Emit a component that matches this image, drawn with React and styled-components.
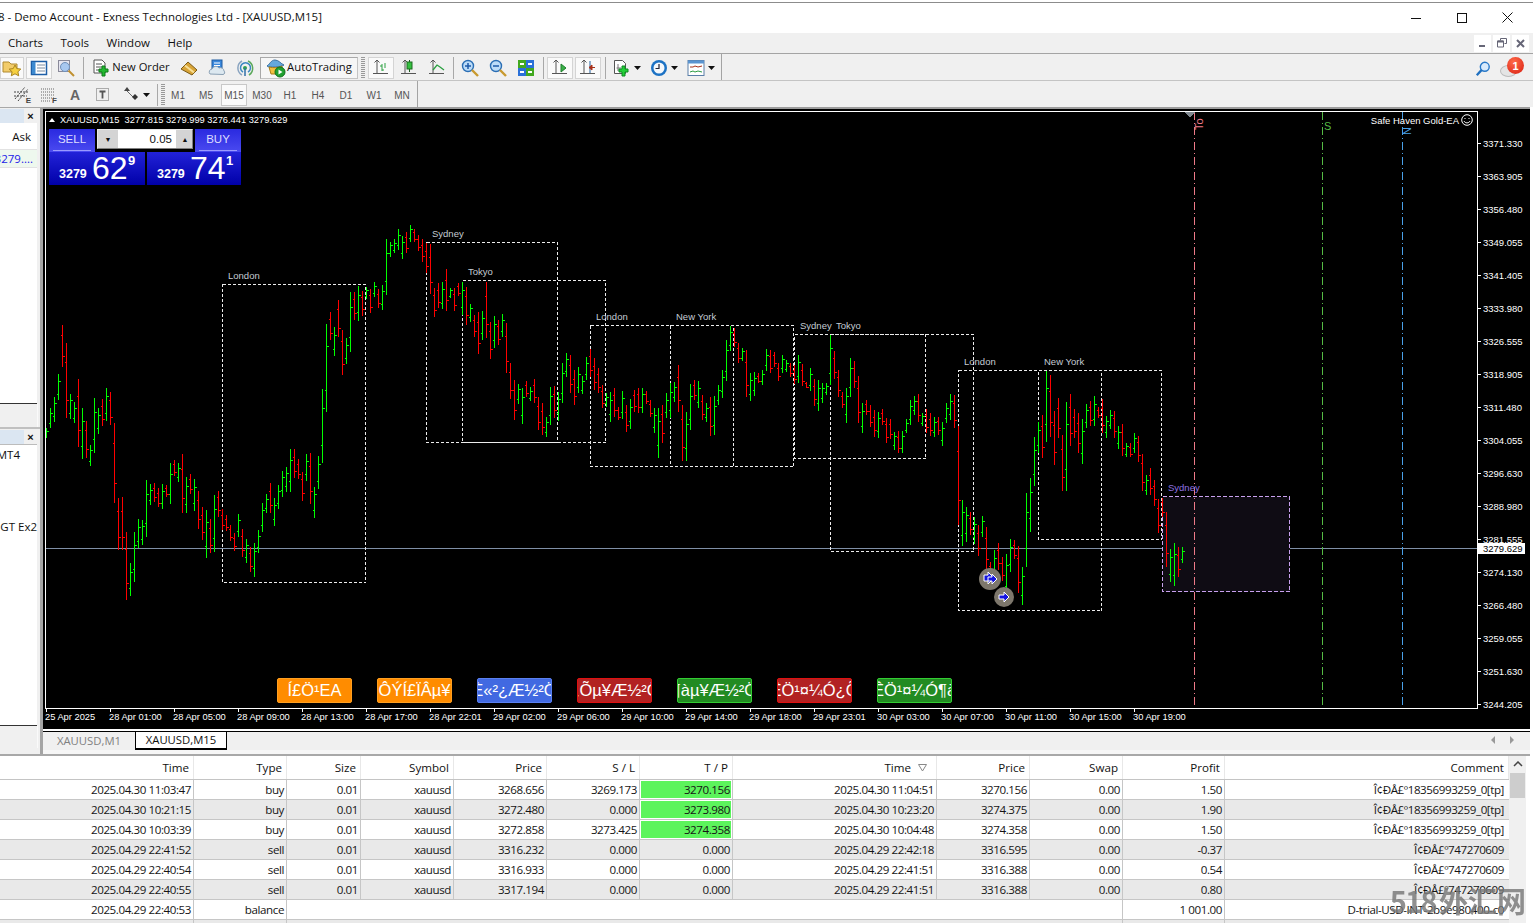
import React from "react";
import styled, { createGlobalStyle } from "styled-components";

const UI_FONT = `"Open Sans", "Noto Sans", sans-serif`;
const CHART_FONT = `"Liberation Sans", Arial, sans-serif`;

const GlobalStyle = createGlobalStyle`
  html, body {
    margin: 0;
    padding: 0;
    background: #fff;
    overflow: hidden;
  }
  * { box-sizing: border-box; }
`;

/* bars read off the reference, in groups: "colour high,low" (3x crop coordinates) */
const BARS_A = "g625,655 g565,625 g532,605 g463,540 r315,440 r370,595 g522,597 g547,610 r478,680 g565,716 r603,714 g675,737 g535,698 g565,642 r538,617 g505,602 r515,615 r610,848 r835,990 r832,990 r937,1140 g1030,1128 g937,1085 g898,985 g900,975 g780,950 g793,855 r790,845 r805,862 g793,868 r795,830 g730,852 r720,768 g730,785 r703,878 g770,878 r763,822 g778,873 r812,926 r860,960 g870,1013 r898,1000 g825,995 r813,890 r868,930 r885,932 r915,963 r940,992 g883,950 r928,1010 g958,1028 r982,1055 g968,1070 g930,998 g850,935 g822,880 r790,878 g835,917 g795,868 g753,830 g742,815 g688,815 r688,775 r718,778 r755,842 g703,782 r700,852 g800,893 g708,808 g508,730 g312,575 r277,360 g322,408 r240,352 r330,465 g355,432 g217,395 r217,300 g198,303 r212,287 g202,236 r208,280 g186,230 r208,263 g195,270 g58,225 g65,110 g58,100 g28,90 g48,117 r35,100 g15,65 r28,65 r45,92 r58,125 r70,160 r72,222 r205,290 r190,265 g187,268 r148,272 g203,235 r205,272 r188,228 g185,285 r200,315 g252,305 r285,350 r275,402 g273,360 r185,355 r305,416 g288,385 r300,375";
const BARS_B = "g282,350 r310,460 r430,538 r480,600 g492,552 g505,612 r483,530 g502,543 r478,548 r532,630 r550,645 g590,650 g500,615 r498,595 g515,602 g428,550 g400,472 r405,520 r450,555 g442,520 g468,522 g410,480 r388,470 r415,510 r445,518 r495,565 g520,560 g517,605 r505,590 r560,600 g513,598 r555,635 g538,626 r510,575 r505,578 g505,578 r512,552 r540,590 g565,640 g565,713 r555,668 g520,595 g490,595 g485,545 r435,575 r555,722 g575,722 g492,630 r480,540 g483,565 r525,600 g550,605 r532,648 g528,645 g495,555 g450,535 g360,482 g318,392 r325,380 r370,428 g385,422 r390,530 g460,542 g457,528 r460,490 g450,495 g388,452 r390,460 r395,440 r430,482 g405,458 g420,455 r428,470 r435,492 g405,490 r432,498 r485,505 g445,512 r478,557 g480,572 g490,550 g488,525 g345,495 r393,478 r450,530 r515,565 g503,608 g415,530 r423,503 r468,610 g550,640 r540,585 r555,622 r570,650 g575,653 r568,615 r595,668 r597,658 g635,690 r633,700 g632,700 g597,640 g540,615 g528,585 r522,605 g580,617 r568,640 r580,648 g590,650 r590,645 g605,678 g550,608 g522,600 r525,625";
const BARS_C = "r257,555 g480,618 g500,605 r517,585 g532,612 r555,648 g528,590 r562,690 r665,720 g630,720 r610,690 r650,722 g642,770 g598,695 r600,658 r618,760 g680,795 g460,680 g415,575 g292,438 g245,340 r225,353 g92,305 r105,292 r213,375 r175,295 r285,452 g187,452 r162,318 r208,295 r220,338 g238,372 g193,265 r183,258 g168,258 r200,235 r178,280 g228,293 g210,268 r213,293 g258,327 r253,347 g308,352 r310,352 g280,338 r288,365 r342,452 g405,465 r385,465 r420,497 r478,580 r473,530 r515,680 g628,725 g610,737 r622,710 g622,670";

const parseBars = (text, base) =>
  text.split(" ").map((item) => {
    const [high, low] = item.slice(1).split(",").map(Number);
    return { up: item[0] === "g", high: base + high / 3, low: base + low / 3 };
  });

const BARS = [
  ...parseBars(BARS_A, 220),
  ...parseBars(BARS_B, 220),
  ...parseBars(BARS_C, 340),
].map((bar, i) => ({ ...bar, x: 46.5 + i * 4 }));

const SESSIONS = [
  { name: "London", x: 222.5, y: 284.5, w: 143, h: 298 },
  { name: "Sydney", x: 426.5, y: 242.5, w: 131, h: 200 },
  { name: "Tokyo", x: 462.5, y: 280.5, w: 143, h: 162 },
  { name: "London", x: 590.5, y: 325.5, w: 143, h: 141 },
  { name: "New York", x: 670.5, y: 325.5, w: 123, h: 141 },
  { name: "Sydney", x: 794.5, y: 334.5, w: 131, h: 124 },
  { name: "Tokyo", x: 830.5, y: 334.5, w: 143, h: 217 },
  { name: "London", x: 958.5, y: 370.5, w: 143, h: 240 },
  { name: "New York", x: 1038.5, y: 370.5, w: 123, h: 169 },
];

const PRICES = [
  "3371.330", "3363.905", "3356.480", "3349.055", "3341.405", "3333.980", "3326.555", "3318.905", "3311.480",
  "3304.055", "3296.630", "3288.980", "3281.555", "3274.130", "3266.480", "3259.055", "3251.630", "3244.205",
];

const TIMES = [
  "25 Apr 2025", "28 Apr 01:00", "28 Apr 05:00", "28 Apr 09:00", "28 Apr 13:00", "28 Apr 17:00", "28 Apr 22:01",
  "29 Apr 02:00", "29 Apr 06:00", "29 Apr 10:00", "29 Apr 14:00", "29 Apr 18:00", "29 Apr 23:01", "30 Apr 03:00",
  "30 Apr 07:00", "30 Apr 11:00", "30 Apr 15:00", "30 Apr 19:00",
];

const ACTIONS = [
  { label: "Í£Ö¹EA", bg: "#ff8c00", edge: "#ff9f20" },
  { label: "ÔÝÍ£ÏÂµ¥", bg: "#ff8c00", edge: "#ff9f20" },
  { label: "È«²¿Æ½²Ö", bg: "#4169e1", edge: "#5a80f0" },
  { label: "¿Õµ¥Æ½²Ö", bg: "#b22222", edge: "#e01010" },
  { label: "¶àµ¥Æ½²Ö", bg: "#228b22", edge: "#32cd32" },
  { label: "ÊÖ¹¤¼Ó¿Õ", bg: "#b22222", edge: "#e01010" },
  { label: "ÊÖ¹¤¼Ó¶à", bg: "#228b22", edge: "#32cd32" },
];

const COLUMNS = "194px 93px 74px 93px 93px 93px 93px 204px 93px 93px 102px 284px";
const HEADERS = ["Time", "Type", "Size", "Symbol", "Price", "S / L", "T / P", "Time", "Price", "Swap", "Profit", "Comment"];
const WX_LONG = "Î¢ÐÅ£º18356993259_0[tp]";
const WX_SHORT = "Î¢ÐÅ£º747270609";

const TRADES = [
  ["2025.04.30 11:03:47", "buy", "0.01", "xauusd", "3268.656", "3269.173", "3270.156", "2025.04.30 11:04:51", "3270.156", "0.00", "1.50", WX_LONG],
  ["2025.04.30 10:21:15", "buy", "0.01", "xauusd", "3272.480", "0.000", "3273.980", "2025.04.30 10:23:20", "3274.375", "0.00", "1.90", WX_LONG],
  ["2025.04.30 10:03:39", "buy", "0.01", "xauusd", "3272.858", "3273.425", "3274.358", "2025.04.30 10:04:48", "3274.358", "0.00", "1.50", WX_LONG],
  ["2025.04.29 22:41:52", "sell", "0.01", "xauusd", "3316.232", "0.000", "0.000", "2025.04.29 22:42:18", "3316.595", "0.00", "-0.37", WX_SHORT],
  ["2025.04.29 22:40:54", "sell", "0.01", "xauusd", "3316.933", "0.000", "0.000", "2025.04.29 22:41:51", "3316.388", "0.00", "0.54", WX_SHORT],
  ["2025.04.29 22:40:55", "sell", "0.01", "xauusd", "3317.194", "0.000", "0.000", "2025.04.29 22:41:51", "3316.388", "0.00", "0.80", WX_SHORT],
];

/* ---------- icons ---------- */

const Icon = ({ children, size = 18, box = 18 }) => (
  <svg width={size} height={size} viewBox={`0 0 ${box} ${box}`} fill="none">
    {children}
  </svg>
);

const Dropdown = () => (
  <svg width="8" height="5" viewBox="0 0 8 5"><path d="M0 0h7L3.5 4z" fill="#111" /></svg>
);

const FolderStar = () => (
  <Icon size={20} box={20}>
    <path d="M1 4h6l2 2h6v8H1z" fill="#f2cc6a" stroke="#b08a30" />
    <path d="M13 7l1.8 3.6 4 .5-2.9 2.7.8 4-3.7-2-3.7 2 .8-4-2.9-2.7 4-.5z" fill="#f6d040" stroke="#a88420" />
  </Icon>
);
const NavigatorIcon = () => (
  <Icon>
    <rect x="1.5" y="2.5" width="15" height="13" fill="#fff" stroke="#1d5fa8" strokeWidth="1.5" />
    <rect x="2" y="3" width="3.5" height="12" fill="#3d8ad0" />
    <path d="M7 6h8M7 9h8M7 12h8" stroke="#7a8ca0" />
  </Icon>
);
const TesterIcon = () => (
  <Icon>
    <rect x="1.5" y="1.5" width="11" height="11" fill="#e6e6f0" stroke="#8a8a9a" />
    <circle cx="8" cy="8" r="4.5" fill="#a8c8f0" stroke="#6f8fb8" />
    <path d="M11.5 11.5L17 17" stroke="#c09030" strokeWidth="2" />
  </Icon>
);
const NewOrderIcon = () => (
  <Icon size={18}>
    <path d="M2 1h8l3 3v10H2z" fill="#fff" stroke="#555" />
    <path d="M4 5h6M4 8h6M4 11h4" stroke="#555" />
    <path d="M10 7h3v3h3v3h-3v4h-3v-4H7v-3h3z" fill="#22b830" stroke="#0d7a18" />
  </Icon>
);
const ChestIcon = () => (
  <Icon>
    <path d="M1 10l7-7 9 8-5 5z" fill="#d8a438" stroke="#7a5a16" />
    <path d="M5 6.5l9 7" stroke="#f8e098" strokeWidth="2" />
  </Icon>
);
const MarketIcon = () => (
  <Icon>
    <rect x="4" y="1" width="10" height="11" fill="#3a88dc" stroke="#1c5aa0" />
    <path d="M6 4h6M6 6.5h6" stroke="#fff" />
    <path d="M2 15a3 3 0 0 1 2-5 4 4 0 0 1 7-1 3.5 3.5 0 0 1 5 3 2 2 0 0 1-1 3.5z" fill="#dce8f0" stroke="#8aa0b4" />
  </Icon>
);
const SignalIcon = () => (
  <Icon>
    <path d="M6 16a8 8 0 0 1 0-14" stroke="#8aa4c0" strokeWidth="1.5" />
    <path d="M12 2a8 8 0 0 1 1 14" stroke="#5aa85a" strokeWidth="1.5" />
    <path d="M7 13a5 5 0 1 1 5 0" stroke="#3a88c0" strokeWidth="1.5" />
    <circle cx="9" cy="9" r="2" fill="#30a050" />
    <path d="M9 9v8" stroke="#2f6fa8" strokeWidth="1.5" />
  </Icon>
);
const AutoIcon = () => (
  <Icon size={20} box={20}>
    <path d="M1 8c3-2 4-6 8-6s6 4 9 5c-2 2-15 3-17 1z" fill="#64a8dc" stroke="#3a70a0" />
    <path d="M3 9c4 1 10 1 13-1l-1 8H5z" fill="#f2c040" stroke="#a87d18" />
    <circle cx="14" cy="14" r="5" fill="#20a030" stroke="#0f7018" />
    <path d="M12.5 11.5l4 2.5-4 2.5z" fill="#fff" />
  </Icon>
);
const Axes = () => <path d="M5 1v14M1 14.5h15M2.5 3.5L5 1l2.5 2.5" stroke="#555" />;
const BarChartIcon = () => (
  <Icon><Axes /><path d="M10 5v7M8 7h2M10 11h2M13 4v5" stroke="#2aa040" /></Icon>
);
const CandleIcon = () => (
  <Icon><Axes /><path d="M9.5 1v12" stroke="#205a20" /><rect x="7" y="3" width="5" height="7" fill="#35c040" stroke="#1c6a20" /></Icon>
);
const LineChartIcon = () => (
  <Icon><Axes /><path d="M5 11l4-5 3 2 4 3" stroke="#2aa040" strokeWidth="1.3" /></Icon>
);
const ZoomIcon = ({ plus }) => (
  <Icon>
    <circle cx="7" cy="7" r="5.5" fill="#bcdcf8" stroke="#2a6eb4" strokeWidth="1.4" />
    <path d="M4 7h6" stroke="#1c5aa8" strokeWidth="1.5" />
    {plus && <path d="M7 4v6" stroke="#1c5aa8" strokeWidth="1.5" />}
    <path d="M11 11l6 6" stroke="#c89a30" strokeWidth="2.4" />
  </Icon>
);
const TileIcon = () => (
  <Icon>
    <rect x="1" y="1" width="8" height="8" fill="#42a820" />
    <rect x="9" y="1" width="8" height="8" fill="#2a70d8" />
    <rect x="1" y="9" width="8" height="8" fill="#2a70d8" />
    <rect x="9" y="9" width="8" height="8" fill="#42a820" />
    <path d="M3 5h4M11 5h4M3 13h4M11 13h4" stroke="#fff" strokeWidth="2" />
  </Icon>
);
const ShiftIcon = () => (
  <Icon><Axes /><path d="M10 5l5 4-5 4z" fill="#3ab048" stroke="#1f7f2c" /></Icon>
);
const AutoScrollIcon = () => (
  <Icon><Axes /><path d="M11 2v12" stroke="#2060a0" /><path d="M16 8.5h-3M13 6l-3 2.5L13 11z" fill="#a83018" stroke="#a83018" /></Icon>
);
const NewChartIcon = () => (
  <Icon>
    <path d="M1.5 1.5h8l3 3v10h-11z" fill="#fff" stroke="#555" />
    <path d="M5 5v7M3.5 9H8" stroke="#777" />
    <path d="M9 7h3v3h3v3h-3v4H9v-4H6v-3h3z" fill="#22d038" stroke="#0d8a20" />
  </Icon>
);
const ClockIcon = () => (
  <Icon>
    <circle cx="9" cy="9" r="8" fill="#1c72c4" />
    <circle cx="9" cy="9" r="5.5" fill="#f4f8fc" />
    <path d="M9 5v4.5H5.5" stroke="#223" strokeWidth="1.2" />
  </Icon>
);
const TemplateIcon = () => (
  <Icon>
    <rect x="1" y="1.5" width="16" height="15" fill="#fff" stroke="#5a7fa8" />
    <rect x="1" y="1.5" width="16" height="3" fill="#5a94d0" />
    <path d="M3 8h3l2-1 3 1 4-1" stroke="#a83018" />
    <path d="M3 13l3-1 2 1 3-1 4 1" stroke="#2a9a40" />
  </Icon>
);
const LinesEIcon = () => (
  <Icon>
    <path d="M2 13L12 1M5 15L15 3M1 6h14M1 10h13" stroke="#444" strokeDasharray="2 1" />
  </Icon>
);
const DotsFIcon = () => (
  <Icon>
    <path d="M2 3h14M2 6h14M2 9h14M2 12h14M2 15h9" stroke="#666" strokeDasharray="1 1" />
  </Icon>
);
const TextBoxIcon = () => (
  <Icon>
    <rect x="2.5" y="2.5" width="12" height="12" stroke="#666" strokeDasharray="1 1" />
    <path d="M5.5 5.5h6M8.5 5.5v7" stroke="#555" strokeWidth="1.8" />
  </Icon>
);
const ArrowsIcon = () => (
  <Icon>
    <path d="M5 1l3 4H2z" fill="#444" />
    <path d="M5 5l7 7" stroke="#666" />
    <path d="M13 8l3 3-3 3-3-3z" fill="#333" />
  </Icon>
);
const SearchIcon = () => (
  <Icon size={16}>
    <circle cx="11" cy="6.5" r="5" fill="#d8eafc" stroke="#2878c8" strokeWidth="1.6" />
    <path d="M7.5 10L2 16" stroke="#2070c0" strokeWidth="2.6" />
  </Icon>
);
const Smiley = () => (
  <svg width="12" height="12" viewBox="0 0 12 12" fill="none">
    <circle cx="6" cy="6" r="5.3" stroke="#fff" />
    <path d="M3 7c1 2.5 5 2.5 6 0" stroke="#fff" />
    <path d="M4 4v1M8 4v1" stroke="#fff" />
  </svg>
);

/* ---------- window chrome ---------- */

const Window = styled.div`
  width: 1533px;
  height: 924px;
  overflow: hidden;
  background: #fff;
  font-family: ${UI_FONT};
  color: #111;
`;

const TitleBar = styled.div`
  height: 33px;
  margin-top: 2px;
  padding-right: 3px;
  border-top: 1px solid #8c8c8c;
  margin-bottom: -2px;
  display: flex;
  align-items: center;
  justify-content: space-between;
  background: #fff;
`;

const TitleText = styled.div`
  font-size: 11.5px;
  margin-left: -2px;
  margin-top: -5px;
  white-space: nowrap;
`;

const WindowButtons = styled.div`
  display: flex;
  width: 137px;
  margin-top: -3px;
`;

const WindowButton = styled.div`
  width: 45.7px;
  display: flex;
  justify-content: center;
  align-items: center;
`;

const MenuBar = styled.div`
  height: 20px;
  background: #f0f0f0;
  padding: 0 3px 0 8px;
  display: flex;
  align-items: center;
  justify-content: space-between;
  font-size: 11.5px;
`;

const MenuItems = styled.div`
  display: flex;
  gap: 17.5px;
  margin-top: -1px;
`;

const MdiButtons = styled.div`
  display: flex;
  gap: 2px;
  margin-right: 1px;
`;

const MdiButton = styled.div`
  width: 17px;
  height: 17px;
  background: #fff;
  display: flex;
  align-items: center;
  justify-content: center;
`;

const ToolRow = styled.div`
  height: 27px;
  padding-top: 2px;
  background: #f0f0f0;
  border-top: 1px solid ${(p) => (p.$first ? "#a4a4a4" : "#c4c4c4")};
  display: flex;
  align-items: center;
  gap: 2px;
  position: relative;
`;

const ToolEnd = styled.div`
  width: 1px;
  height: 26px;
  margin-top: -2px;
  background: #a4a4a4;
`;

const ToolButton = styled.div`
  width: ${(p) => p.$w}px;
  height: 22px;
  display: flex;
  align-items: center;
  justify-content: center;
  gap: ${(p) => p.$gap || 0}px;
  font-size: 11.2px;
  color: ${(p) => p.$color || "#111"};
  background: ${(p) => (p.$pressed ? "#fafafa" : "transparent")};
  border: 1px solid ${(p) => (p.$pressed ? "#d4d4d4" : "transparent")};
`;

const ToolLabel = styled.span`
  transform: translateY(-2px);
`;

const TimeframeButton = styled(ToolButton)`
  font-family: ${CHART_FONT};
  font-size: 10px;
  color: #555;
  width: 26px;
  border: ${(p) => (p.$pressed ? "1px solid #c8c8c8" : "1px solid transparent")};
`;

const AutoButton = styled(ToolButton)`
  background: #f6f6f6;
  font-size: 11.3px;
  border: 1px solid #c4c4c4;
  border-top-color: #a8a8a8;
  border-left-color: #a8a8a8;
`;

const Separator = styled.div`
  width: ${(p) => p.$w}px;
  height: 22px;
  display: flex;
  justify-content: center;
  &::before {
    content: "";
    width: 1px;
    height: 100%;
    background: #a8a8a8;
  }
`;

const Grip = styled.div`
  width: 4px;
  height: 22px;
  margin-left: ${(p) => p.$ml || 0}px;
  margin-right: ${(p) => p.$mr || 0}px;
  background: repeating-linear-gradient(to bottom, #999 0 1px, transparent 1px 2px);
`;

const GlyphA = styled.span`
  font-family: ${CHART_FONT};
  font-size: 14px;
  font-weight: 700;
  color: #666;
`;

const SubLetter = styled.span`
  font-family: ${CHART_FONT};
  font-size: 8px;
  font-weight: 700;
  color: #444;
  align-self: flex-end;
  margin-left: -5px;
`;

const RightTools = styled.div`
  position: absolute;
  right: 9px;
  top: 3px;
  display: flex;
  align-items: flex-end;
  gap: 9px;
  height: 20px;
`;

const Bubble = styled.div`
  position: relative;
  width: 24px;
  height: 20px;
`;

const BubbleTail = styled.div`
  position: absolute;
  left: 0;
  top: 8px;
  width: 17px;
  height: 12px;
  border-radius: 50%;
  background: #e4e4e4;
  border: 1px solid #bbb;
`;

const Badge = styled.div`
  position: absolute;
  right: 0;
  top: 0;
  width: 17px;
  height: 17px;
  border-radius: 50%;
  background: radial-gradient(circle at 40% 30%, #ff6a4a, #d81e10);
  color: #fff;
  font-family: ${CHART_FONT};
  font-size: 11px;
  font-weight: 700;
  display: flex;
  align-items: center;
  justify-content: center;
`;

/* ---------- sidebar ---------- */

const Body = styled.div`
  display: flex;
  height: 647px;
`;

const Sidebar = styled.div`
  width: 43px;
  flex: none;
  display: flex;
  flex-direction: column;
  background: #f0f0f0;
  border-top: 1px solid #a8a8a8;
  border-right: 3px solid #a4a4a4;
  padding-top: 1px;
  font-size: 11.5px;
`;

const PanelHeader = styled.div`
  height: 14px;
  width: 37px;
  display: flex;
  justify-content: space-between;
`;

const PanelTitle = styled.div`
  width: 24px;
  background: #dbe6f2;
`;

const CloseMark = styled.div`
  width: 13px;
  text-align: center;
  font-family: ${CHART_FONT};
  font-weight: 700;
  font-size: 11px;
  line-height: 14px;
  background: #f0f0f0;
  color: #111;
`;

const WatchPanel = styled.div`
  width: 37px;
  height: 281px;
  background: #fff;
  border-bottom: 1px solid #333;
`;

const WatchRow = styled.div`
  height: ${(p) => p.$h}px;
  padding-right: ${(p) => p.$pad}px;
  display: flex;
  align-items: center;
  justify-content: flex-end;
  white-space: nowrap;
  overflow: hidden;
  color: ${(p) => p.$color || "#111"};
  background: ${(p) => p.$bg || "#fff"};
  border-bottom: 1px solid #e2e2e2;
`;

const PanelSpacer = styled.div`
  height: ${(p) => p.$h}px;
  width: 38px;
  border-right: 1px solid #fafafa;
`;

const PanelDivider = styled.div`
  height: 2px;
  background: #c0c0c0;
  margin-bottom: 1px;
`;

const NavPanel = styled.div`
  width: 37px;
  height: 282px;
  background: #fff;
  border-top: 1px solid #bcbcbc;
  border-bottom: 1px solid #333;
  display: flex;
  flex-direction: column;
  align-items: flex-end;
`;

const NavItem = styled.div`
  height: 18px;
  line-height: 18px;
  padding-right: ${(p) => p.$pad}px;
  white-space: nowrap;
  margin-top: ${(p) => p.$top}px;
`;

/* ---------- chart ---------- */

const Main = styled.div`
  width: 1487px;
  flex: none;
  display: flex;
  flex-direction: column;
`;

const ChartFrame = styled.div`
  height: 624px;
  background: #000;
  border-top: 2px solid #9c9c9c;
  border-bottom: 2px solid #fff;
  padding: 2px 0 0 2px;
  display: grid;
  grid-template-columns: 1433px 52px;
  grid-template-rows: 598px 20px;
`;

const Plot = styled.div`
  position: relative;
  overflow: hidden;
  font-family: ${CHART_FONT};
  color: #fff;
  border: 1px solid #fff;
`;

const PlotCanvas = styled.svg`
  position: absolute;
  left: -1px;
  top: -1px;
  display: block;
  shape-rendering: crispEdges;
`;

const SessionLabel = styled.text`
  font-family: ${CHART_FONT};
  font-size: 9.5px;
  fill: ${(p) => p.$color || "#c4ccd4"};
  shape-rendering: auto;
`;

const MarkerText = styled.text`
  font-family: ${CHART_FONT};
  font-size: 11px;
  fill: ${(p) => p.$color};
`;

const ChartInfo = styled.div`
  position: absolute;
  left: 3px;
  top: 1px;
  height: 14px;
  display: flex;
  align-items: center;
  font-size: 9.3px;
  white-space: pre;
`;

const InfoTriangle = styled.span`
  width: 0;
  height: 0;
  border-left: 3.5px solid transparent;
  border-right: 3.5px solid transparent;
  border-bottom: 4px solid #fff;
  margin-right: 5px;
`;

const ExpertLabel = styled.div`
  position: absolute;
  right: 4px;
  top: 2px;
  display: flex;
  align-items: center;
  gap: 2px;
  font-size: 9.5px;
  white-space: nowrap;
`;

const TradePanel = styled.div`
  position: absolute;
  left: 3px;
  top: 17px;
  width: 192px;
  display: grid;
  grid-template-columns: 46px 96px 46px;
  grid-template-rows: 23px 33px;
  column-gap: 2px;
`;

const SideButton = styled.div`
  background: linear-gradient(#2a2ae0, #4a4af0);
  display: flex;
  align-items: flex-start;
  justify-content: center;
  padding-top: 4px;
  font-size: 11.5px;
  color: #dcdcff;
  position: relative;
  &::after {
    content: "";
    position: absolute;
    left: 4px;
    right: 4px;
    bottom: 1px;
    height: 1px;
    background: #9a9aff;
  }
`;

const Stepper = styled.div`
  height: 20px;
  background: #d4d4d4;
  display: grid;
  grid-template-columns: 20px 58px 18px;
  border: 1px solid #808080;
  border-top-color: #e8e8e8;
  border-left-color: #e8e8e8;
`;

const StepButton = styled.div`
  display: flex;
  align-items: center;
  justify-content: center;
  color: #111;
  font-size: 7px;
`;

const LotInput = styled.div`
  background: #fff;
  color: #111;
  font-size: 11.5px;
  text-align: right;
  padding-right: 4px;
  line-height: 18px;
`;

const QuoteTiles = styled.div`
  grid-column: 1 / -1;
  display: grid;
  grid-template-columns: 96px 94px;
  column-gap: 2px;
`;

const QuoteTile = styled.div`
  background: linear-gradient(#2222d8, #0000a8);
  color: #fff;
  display: flex;
  align-items: flex-start;
  padding-left: 10px;
`;

const QuoteBase = styled.span`
  font-size: 12.5px;
  font-weight: 700;
  margin-top: 15px;
  width: 33px;
  flex: none;
`;

const QuoteBig = styled.span`
  font-size: 32px;
  line-height: 33px;
  width: 36px;
  flex: none;
`;

const QuoteSmall = styled.span`
  font-size: 13px;
  font-weight: 700;
  margin-top: 1px;
`;

const ActionBar = styled.div`
  position: absolute;
  left: 231px;
  top: 566px;
  display: flex;
  gap: 25px;
`;

const ActionButton = styled.div`
  width: 75px;
  height: 25px;
  border-radius: 2px;
  border: 1px solid ${(p) => p.$edge};
  background: ${(p) => p.$bg};
  color: #fff;
  font-size: 16.5px;
  overflow: hidden;
  white-space: nowrap;
  display: flex;
  justify-content: center;
  align-items: center;
`;

const PriceAxis = styled.div`
  position: relative;
  padding-top: 16px;
  font-family: ${CHART_FONT};
  font-size: 9.5px;
  color: #fff;
`;

const PriceTick = styled.div`
  height: 33px;
  display: flex;
  align-items: center;
  gap: 2px;
  &::before {
    content: "";
    width: 3px;
    height: 1px;
    background: #fff;
  }
`;

const LastPrice = styled.div`
  position: absolute;
  left: 0;
  top: 432px;
  width: 47px;
  height: 11px;
  line-height: 11px;
  padding-left: 5px;
  background: #fff;
  color: #000;
  font-size: 9.5px;
`;

const TimeAxis = styled.div`
  grid-column: 1 / -1;
  display: flex;
  font-family: ${CHART_FONT};
  font-size: 9.3px;
  color: #fff;
`;

const TimeTick = styled.div`
  width: 64px;
  flex: none;
  padding-top: 3px;
  white-space: nowrap;
  position: relative;
  &::before {
    content: "";
    position: absolute;
    left: 1px;
    top: 0;
    width: 1px;
    height: 3px;
    background: #fff;
  }
`;

const TabStrip = styled.div`
  height: 19px;
  background: #f0f0f0;
  border-top: 1px solid #000;
  display: flex;
  align-items: stretch;
  position: relative;
  font-size: 11.3px;
`;

const ChartTab = styled.div`
  width: ${(p) => p.$w}px;
  display: flex;
  align-items: center;
  justify-content: center;
  color: ${(p) => (p.$active ? "#111" : "#808080")};
  background: ${(p) => (p.$active ? "#fff" : "#f0f0f0")};
  border: ${(p) => (p.$active ? "1px solid #000" : "none")};
  border-top: none;
  border-bottom-width: 2px;
  padding-bottom: 1px;
`;

const TabArrows = styled.div`
  position: absolute;
  right: 16px;
  top: 4px;
  display: flex;
  gap: 15px;
`;

const TabArrow = styled.span`
  width: 0;
  height: 0;
  border-top: 4px solid transparent;
  border-bottom: 4px solid transparent;
  border-${(p) => (p.$left ? "right" : "left")}: 4px solid #999;
`;

const TabGap = styled.div`
  height: 4px;
  background: #f6f6f6;
`;

/* ---------- terminal table ---------- */

const Terminal = styled.div`
  position: relative;
  width: 1530px;
  height: 169px;
  border-top: 2px solid #a8a8a8;
  font-size: 11.6px;
  display: grid;
  grid-template-columns: 1509px 17px;
`;

const TableBody = styled.div`
  overflow: hidden;
`;

const HeaderRow = styled.div`
  display: grid;
  grid-template-columns: ${COLUMNS};
  height: 24px;
  border-bottom: 1px solid #c4c4c4;
`;

const HeaderCell = styled.div`
  padding-right: ${(p) => (p.$sorted ? 25 : 4)}px;
  text-align: right;
  line-height: 23px;
  border-right: 1px solid #e8e8e8;
  position: relative;
`;

const SortMark = styled.svg`
  position: absolute;
  right: 9px;
  top: 8px;
`;

const TradeRow = styled.div`
  display: grid;
  grid-template-columns: ${COLUMNS};
  height: 20px;
  background: ${(p) => (p.$odd ? "#e9e9e9" : "#fff")};
  border-bottom: 1px solid #c6c6c6;
`;

const TradeCell = styled.div`
  padding-right: 2px;
  text-align: right;
  line-height: 19px;
  letter-spacing: -0.42px;
  white-space: nowrap;
  overflow: hidden;
  border-right: 1px solid #c6c6c6;
  color: #151515;
  ${(p) => p.$span && `grid-column: span ${p.$span};`}
  ${(p) => p.$hit && `background: #5cf45c; box-shadow: inset 0 0 0 1px #fff;`}
`;

const CommentCell = styled(TradeCell)`
  padding-right: 5px;
  border-right: none;
`;

const ScrollTrack = styled.div`
  background: #f0f0f0;
  display: flex;
  flex-direction: column;
  align-items: center;
`;

const ScrollUp = styled.div`
  height: 17px;
  display: flex;
  align-items: center;
`;

const ScrollThumb = styled.div`
  width: 15px;
  height: 25px;
  background: #cdcdcd;
`;

const Watermark = styled.div`
  position: absolute;
  right: 4px;
  top: 127px;
  font-family: "Noto Sans CJK SC", sans-serif;
  font-size: 29px;
  font-weight: 700;
  line-height: 34px;
  color: rgba(120, 120, 120, 0.82);
  filter: blur(0.6px);
  white-space: nowrap;
`;

const WatermarkDigits = styled.span`
  letter-spacing: -1.7px;
  margin-right: 3px;
`;

const TIMEFRAMES = ["M1", "M5", "M15", "M30", "H1", "H4", "D1", "W1", "MN"];

const ChartCanvas = () => (
  <PlotCanvas width="1433" height="598" viewBox="45 111 1433 598">
    <line x1="46" x2="1477" y1="548.5" y2="548.5" stroke="#7f8fa6" />
    <rect x="1162.5" y="496.5" width="127" height="95" fill="#0f0c14" stroke="#c8a0ee" strokeDasharray="4 2" />
    {SESSIONS.map((s, i) => (
      <rect key={i} x={s.x} y={s.y} width={s.w} height={s.h} fill="none" stroke="#ececec" strokeDasharray="3 2" />
    ))}
    <line x1="1194.5" x2="1194.5" y1="112" y2="708" stroke="#ef7a88" strokeDasharray="8 3 1 3" />
    <line x1="1322.5" x2="1322.5" y1="112" y2="708" stroke="#55bb44" strokeDasharray="8 3 1 3" />
    <line x1="1402.5" x2="1402.5" y1="112" y2="708" stroke="#4aa0e8" strokeDasharray="8 3 1 3" />
    <path d="M1184.5 112h11l-5.500 6z" fill="#808890" />
    <MarkerText $color="#ef7a88" transform="translate(1203 130) rotate(-90)">To</MarkerText>
    <MarkerText $color="#55bb44" x="1324" y="130">S</MarkerText>
    <MarkerText $color="#4aa0e8" transform="translate(1411 135) rotate(-90)">N</MarkerText>
    {BARS.map((b, i) => {
      const color = b.up ? "#00ff00" : "#ff0000";
      const h = b.low - b.high;
      const open = b.up ? b.low - h * 0.25 : b.high + h * 0.25;
      const close = b.up ? b.high + h * 0.25 : b.low - h * 0.25;
      return (
        <g key={i} stroke={color}>
          <line x1={b.x} x2={b.x} y1={Math.round(b.high)} y2={Math.round(b.low)} />
          <line x1={b.x - 2} x2={b.x} y1={Math.round(open) + 0.5} y2={Math.round(open) + 0.5} />
          <line x1={b.x} x2={b.x + 2} y1={Math.round(close) + 0.5} y2={Math.round(close) + 0.5} />
        </g>
      );
    })}
    {SESSIONS.map((s, i) => (
      <SessionLabel key={i} x={s.x + 5.5} y={s.y - 6}>{s.name}</SessionLabel>
    ))}
    <SessionLabel $color="#8f72e0" x="1168" y="491">Sydney</SessionLabel>
    <g shapeRendering="auto">
      <circle cx="990" cy="579" r="11" fill="#7d776c" />
      <path d="M984 575h4v-3l6 6-6 6v-3h-4z" fill="#1414e0" stroke="#fff" />
      <path d="M988 577h4v-3l5 5-5 5v-3h-4z" fill="#1414e0" stroke="#fff" />
      <circle cx="1004" cy="597" r="10" fill="#7d776c" />
      <path d="M999 595h5v-3l5 5-5 5v-3h-5z" fill="#1414e0" stroke="#fff" />
    </g>
  </PlotCanvas>
);

export default function App() {
  return (
    <Window>
      <GlobalStyle />
      <TitleBar>
        <TitleText>8 - Demo Account - Exness Technologies Ltd - [XAUUSD,M15]</TitleText>
        <WindowButtons>
          <WindowButton>
            <svg width="10" height="10" viewBox="0 0 10 10"><path d="M0 5.5h10" stroke="#111" /></svg>
          </WindowButton>
          <WindowButton>
            <svg width="10" height="10" viewBox="0 0 10 10"><rect x=".5" y=".5" width="9" height="9" fill="none" stroke="#111" /></svg>
          </WindowButton>
          <WindowButton>
            <svg width="11" height="11" viewBox="0 0 11 11"><path d="M.5.5l10 10M10.5.5l-10 10" stroke="#111" /></svg>
          </WindowButton>
        </WindowButtons>
      </TitleBar>

      <MenuBar>
        <MenuItems>
          <span>Charts</span>
          <span>Tools</span>
          <span>Window</span>
          <span>Help</span>
        </MenuItems>
        <MdiButtons>
          <MdiButton>
            <svg width="9" height="9" viewBox="0 0 9 9"><path d="M1 7h6" stroke="#667" strokeWidth="2" /></svg>
          </MdiButton>
          <MdiButton>
            <svg width="10" height="10" viewBox="0 0 10 10" fill="none"><path d="M3.5 2.5v-2h6v5h-2M.5 3h6v6h-6z" stroke="#667" /><path d="M.5 3.5h6" stroke="#667" strokeWidth="2" /></svg>
          </MdiButton>
          <MdiButton>
            <svg width="9" height="9" viewBox="0 0 9 9"><path d="M1 1l7 7M8 1l-7 7" stroke="#667" strokeWidth="2" /></svg>
          </MdiButton>
        </MdiButtons>
      </MenuBar>

      <ToolRow $first>
        <ToolButton $w={24} $pressed><FolderStar /></ToolButton>
        <ToolButton $w={26} $pressed><NavigatorIcon /></ToolButton>
        <ToolButton $w={24}><TesterIcon /></ToolButton>
        <Separator $w={6} />
        <ToolButton $w={86} $gap={2}><NewOrderIcon /><ToolLabel>New Order</ToolLabel></ToolButton>
        <ToolButton $w={26}><ChestIcon /></ToolButton>
        <ToolButton $w={26}><MarketIcon /></ToolButton>
        <ToolButton $w={26}><SignalIcon /></ToolButton>
        <AutoButton $w={98} $gap={1}><AutoIcon /><ToolLabel>AutoTrading</ToolLabel></AutoButton>
        <Grip $ml={1} $mr={1} />
        <ToolButton $w={26} $pressed><BarChartIcon /></ToolButton>
        <ToolButton $w={26}><CandleIcon /></ToolButton>
        <ToolButton $w={26}><LineChartIcon /></ToolButton>
        <Separator $w={3} />
        <ToolButton $w={26}><ZoomIcon plus /></ToolButton>
        <ToolButton $w={26}><ZoomIcon /></ToolButton>
        <ToolButton $w={26}><TileIcon /></ToolButton>
        <Separator $w={4} />
        <ToolButton $w={26} $pressed><ShiftIcon /></ToolButton>
        <ToolButton $w={26} $pressed><AutoScrollIcon /></ToolButton>
        <Separator $w={4} />
        <ToolButton $w={36} $gap={3}><NewChartIcon /><Dropdown /></ToolButton>
        <ToolButton $w={34} $gap={3}><ClockIcon /><Dropdown /></ToolButton>
        <ToolButton $w={36} $gap={3}><TemplateIcon /><Dropdown /></ToolButton>
        <ToolEnd />
        <RightTools>
          <SearchIcon />
          <Bubble>
            <BubbleTail />
            <Badge>1</Badge>
          </Bubble>
        </RightTools>
      </ToolRow>

      <ToolRow>
        <ToolButton $w={8} />
        <ToolButton $w={24}><LinesEIcon /><SubLetter>E</SubLetter></ToolButton>
        <ToolButton $w={24}><DotsFIcon /><SubLetter>F</SubLetter></ToolButton>
        <ToolButton $w={26}><GlyphA>A</GlyphA></ToolButton>
        <ToolButton $w={26}><TextBoxIcon /></ToolButton>
        <ToolButton $w={36} $gap={3}><ArrowsIcon /><Dropdown /></ToolButton>
        <Separator $w={3} />
        <Grip $mr={-2} />
        {TIMEFRAMES.map((tf) => (
          <TimeframeButton key={tf} $pressed={tf === "M15"}>{tf}</TimeframeButton>
        ))}
        <ToolEnd />
      </ToolRow>

      <Body>
        <Sidebar>
          <PanelHeader>
            <PanelTitle />
            <CloseMark>×</CloseMark>
          </PanelHeader>
          <WatchPanel>
            <WatchRow $h={27} $pad={6}>Ask</WatchRow>
            <WatchRow $h={18} $pad={4} $color="#2222e8" $bg="#eef8ee">3279....</WatchRow>
          </WatchPanel>
          <PanelSpacer $h={23} />
          <PanelDivider />
          <PanelHeader>
            <PanelTitle />
            <CloseMark>×</CloseMark>
          </PanelHeader>
          <NavPanel>
            <NavItem $pad={17} $top={1}>MT4</NavItem>
            <NavItem $pad={0} $top={54}>GT Ex2</NavItem>
          </NavPanel>
          <PanelSpacer $h={22} />
        </Sidebar>

        <Main>
          <ChartFrame>
            <Plot>
              <ChartCanvas />
              <ChartInfo>
                <InfoTriangle />
                XAUUSD,M15{"  "}3277.815 3279.999 3276.441 3279.629
              </ChartInfo>
              <ExpertLabel>
                Safe Haven Gold-EA
                <Smiley />
              </ExpertLabel>
              <TradePanel>
                <SideButton>SELL</SideButton>
                <Stepper>
                  <StepButton>▼</StepButton>
                  <LotInput>0.05</LotInput>
                  <StepButton>▲</StepButton>
                </Stepper>
                <SideButton>BUY</SideButton>
                <QuoteTiles>
                  <QuoteTile>
                    <QuoteBase>3279</QuoteBase>
                    <QuoteBig>62</QuoteBig>
                    <QuoteSmall>9</QuoteSmall>
                  </QuoteTile>
                  <QuoteTile>
                    <QuoteBase>3279</QuoteBase>
                    <QuoteBig>74</QuoteBig>
                    <QuoteSmall>1</QuoteSmall>
                  </QuoteTile>
                </QuoteTiles>
              </TradePanel>
              <ActionBar>
                {ACTIONS.map((a) => (
                  <ActionButton key={a.label} $bg={a.bg} $edge={a.edge}>{a.label}</ActionButton>
                ))}
              </ActionBar>
            </Plot>
            <PriceAxis>
              {PRICES.map((p) => (
                <PriceTick key={p}>{p}</PriceTick>
              ))}
              <LastPrice>3279.629</LastPrice>
            </PriceAxis>
            <TimeAxis>
              {TIMES.map((t) => (
                <TimeTick key={t}>{t}</TimeTick>
              ))}
            </TimeAxis>
          </ChartFrame>
          <TabStrip>
            <ChartTab $w={92}>XAUUSD,M1</ChartTab>
            <ChartTab $w={92} $active>XAUUSD,M15</ChartTab>
            <TabArrows>
              <TabArrow $left />
              <TabArrow />
            </TabArrows>
          </TabStrip>
          <TabGap />
        </Main>
      </Body>

      <Terminal>
        <TableBody>
          <HeaderRow>
            {HEADERS.map((h, i) => (
              <HeaderCell key={i} $sorted={i === 7}>
                {h}
                {i === 7 && (
                  <SortMark width="9" height="8" viewBox="0 0 9 8" fill="none">
                    <path d="M.5.5h8L4.5 7z" stroke="#888" />
                  </SortMark>
                )}
              </HeaderCell>
            ))}
          </HeaderRow>
          {TRADES.map((row, r) => (
            <TradeRow key={r} $odd={r % 2 === 1}>
              {row.slice(0, 11).map((v, c) => (
                <TradeCell key={c} $hit={c === 6 && r < 3}>{v}</TradeCell>
              ))}
              <CommentCell>{row[11]}</CommentCell>
            </TradeRow>
          ))}
          <TradeRow>
            <TradeCell>2025.04.29 22:40:53</TradeCell>
            <TradeCell>balance</TradeCell>
            <TradeCell $span={8} />
            <TradeCell>1 001.00</TradeCell>
            <CommentCell>D-trial-USD-INT-2b9e980400-c0</CommentCell>
          </TradeRow>
          <TradeRow $odd>
            <TradeCell />
            <TradeCell />
            <TradeCell $span={8} />
            <TradeCell />
            <CommentCell />
          </TradeRow>
        </TableBody>
        <ScrollTrack>
          <ScrollUp>
            <svg width="10" height="7" viewBox="0 0 10 7" fill="none"><path d="M1 5l4-4 4 4" stroke="#444" strokeWidth="1.5" /></svg>
          </ScrollUp>
          <ScrollThumb />
        </ScrollTrack>
        <Watermark>
          <WatermarkDigits>518</WatermarkDigits>外汇网
        </Watermark>
      </Terminal>
    </Window>
  );
}
